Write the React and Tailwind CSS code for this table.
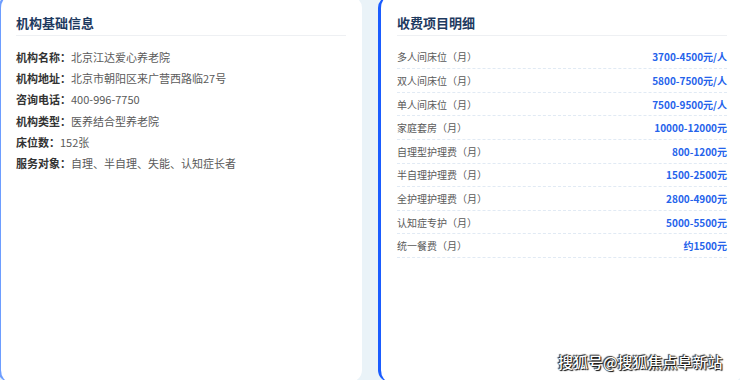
export default function App() {
  const info = [
    ["机构名称：", "北京江达爱心养老院"],
    ["机构地址：", "北京市朝阳区来广营西路临27号"],
    ["咨询电话：", "400-996-7750"],
    ["机构类型：", "医养结合型养老院"],
    ["床位数：", "152张"],
    ["服务对象：", "自理、半自理、失能、认知症长者"],
  ];
  const fees = [
    ["多人间床位（月）", "3700-4500元/人"],
    ["双人间床位（月）", "5800-7500元/人"],
    ["单人间床位（月）", "7500-9500元/人"],
    ["家庭套房（月）", "10000-12000元"],
    ["自理型护理费（月）", "800-1200元"],
    ["半自理护理费（月）", "1500-2500元"],
    ["全护理护理费（月）", "2800-4900元"],
    ["认知症专护（月）", "5000-5500元"],
    ["统一餐费（月）", "约1500元"],
  ];
  return (
    <div
      className="relative w-[740px] h-[380px] overflow-hidden bg-[#eaf3f8]"
      style={{ fontFamily: '"Noto Sans CJK SC", "Noto Sans", sans-serif' }}
    >
      <div className="flex gap-4 -ml-[2px] -mt-[4px]">
        <div className="w-[364px] h-[386px] shrink-0 bg-white rounded-xl border-l-[3px] border-[#6d9dff] pl-[15px] pr-4 pt-[18px]">
          <div className="text-[13px] font-bold leading-[18px] text-[#1e3a5f] pb-[3px] border-b border-[#eef0f3]">
            机构基础信息
          </div>
          <div className="mt-[11px]">
            {info.map(([k, v]) => (
              <div key={k} className="text-[11px] leading-[21.2px] whitespace-nowrap">
                <span className="font-bold text-[#333]">{k}</span>
                <span className="text-[#5a5a5a]">{v}</span>
              </div>
            ))}
          </div>
        </div>
        <div className="w-[365px] h-[386px] shrink-0 bg-white rounded-xl border-l-[3px] border-[#1a5cff] px-4 pt-[18px]">
          <div className="text-[13px] font-bold leading-[18px] text-[#1e3a5f] pb-[3px] border-b border-[#eef0f3]">
            收费项目明细
          </div>
          <div className="mt-[9.6px]">
            {fees.map(([k, v]) => (
              <div
                key={k}
                className="h-[23.6px] flex items-center justify-between border-b border-dashed border-[#e1eaf4] text-[10px]"
              >
                <span className="text-[#5a5a5a]">{k}</span>
                <span className="font-bold text-[#2563eb]">{v}</span>
              </div>
            ))}
          </div>
        </div>
      </div>
      <div className="absolute left-[558px] top-[351px] text-[15px] leading-[22px] font-medium text-white whitespace-nowrap [text-shadow:0_0_1px_#000,1px_1px_1px_#000,-1px_-1px_1px_#333]">
        搜狐号@搜狐焦点阜新站
      </div>
    </div>
  );
}
